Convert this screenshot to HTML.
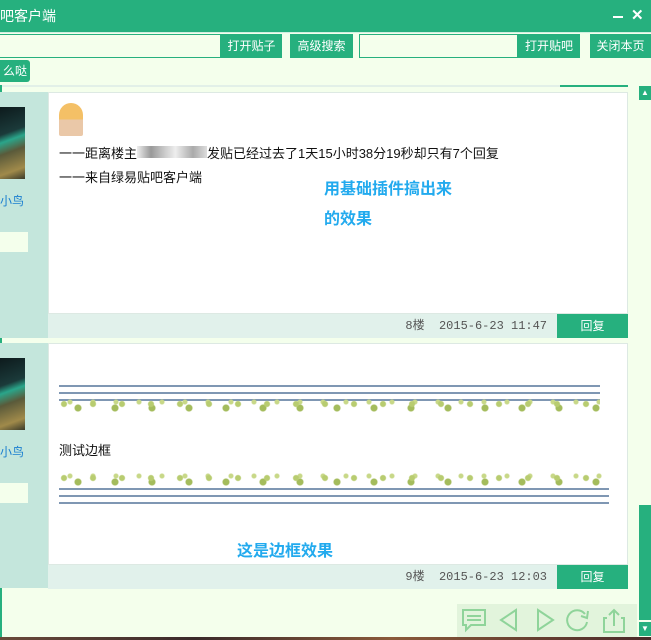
<!DOCTYPE html>
<html><head><meta charset="utf-8"><style>
*{margin:0;padding:0;box-sizing:border-box}
body{width:651px;height:640px;position:relative;overflow:hidden;background:#f4ffec;font-family:"Liberation Sans","Noto Sans CJK SC",sans-serif;font-size:13px;color:#111}
.a{position:absolute}
.title{left:0;top:0;width:651px;height:32px;background:#26b07e;color:#fff;font-size:14px;line-height:32px;padding-left:0}
.inp{background:#f4ffec;border:1px solid #26b07e;height:24px;top:34px}
.btn{background:#26b07e;color:#fff;height:24px;top:34px;line-height:24px;text-align:center;font-size:12px}
.left{background:#c4e6dc;left:0;width:48px}
.post{background:#fff;left:48px;width:580px;border:1px solid #dde9e3}
.foot{background:#e1f1eb;left:48px;width:509px;height:24px;text-align:right;font-size:12px;color:#555;line-height:24px;padding-right:10px;font-family:"Liberation Mono","Noto Sans CJK SC",monospace}
.rep{background:#26b07e;color:#fff;left:557px;width:71px;height:24px;line-height:24px;text-align:center;font-size:12px}
.pic{left:0;width:25px;height:72px;background:linear-gradient(160deg,#0d1a1c 0%,#1b3a3a 35%,#2aa58a 45%,#5a5a3a 60%,#a08a4a 85%,#3a3a2a 100%)}
.name{color:#1a7fd0;font-size:12px;left:0}
.box{left:0;width:28px;height:20px;background:#f4ffec}
.blue{color:#22aaee;font-weight:bold;font-size:16px}
.line{height:2px;background:#7f97b3;left:59px}
.stars{height:16px;left:59px;background:
radial-gradient(circle at 5px 6px,#b8cc70 0 2.5px,transparent 3.5px) 0 0/29px 16px,
radial-gradient(circle at 5px 10px,#a4bc5c 0 3px,transparent 4px) 14px 0/37px 16px,
radial-gradient(circle at 4px 4px,#c8d888 0 2px,transparent 3px) 7px 0/23px 16px}
</style></head><body>
<div class="a title">吧客户端</div>
<div class="a" style="left:613px;top:16px;width:10px;height:2px;background:#fff"></div>
<div class="a" style="left:631px;top:6px;color:#fff;font-size:15px;font-weight:bold">✕</div>
<div class="a" style="left:0;top:32px;width:651px;height:1px;background:#d0eee0"></div>
<div class="a inp" style="left:-1px;width:222px"></div>
<div class="a btn" style="left:221px;width:61px">打开贴子</div>
<div class="a btn" style="left:290px;width:63px">高级搜索</div>
<div class="a inp" style="left:359px;width:159px"></div>
<div class="a btn" style="left:518px;width:62px">打开贴吧</div>
<div class="a btn" style="left:590px;width:61px">关闭本页</div>
<div class="a btn" style="left:0;top:60px;width:30px;height:22px;line-height:22px;border-radius:0 3px 3px 0">么哒</div>
<div class="a" style="left:0;top:85px;width:560px;height:2px;background:#e2f0e8"></div>
<div class="a" style="left:560px;top:85px;width:68px;height:2px;background:#26b07e"></div>
<div class="a" style="left:0;top:85px;width:2px;height:552px;background:#26b07e"></div>

<div class="a left" style="top:92px;height:246px"></div>
<div class="a pic" style="top:107px"></div>
<div class="a name" style="top:192px">小鸟</div>
<div class="a box" style="top:232px"></div>
<div class="a post" style="top:92px;height:222px"></div>
<div class="a" style="left:59px;top:103px;width:24px;height:33px;border-radius:12px 12px 2px 2px;background:linear-gradient(#f4c066 0 50%,#eac8a8 50%)"></div>
<div class="a" style="left:59px;top:143px">一一距离楼主<span style="display:inline-block;width:70px;height:12px;background:linear-gradient(90deg,#eee,#999 20%,#ccc 40%,#eee 55%,#aaa 80%,#ddd)"></span>发贴已经过去了1天15小时38分19秒却只有7个回复</div>
<div class="a" style="left:59px;top:167px">一一来自绿易贴吧客户端</div>
<div class="a blue" style="left:324px;top:175px">用基础插件搞出来</div>
<div class="a blue" style="left:324px;top:205px">的效果</div>
<div class="a foot" style="top:314px">8楼&nbsp;&nbsp;2015-6-23 11:47</div>
<div class="a rep" style="top:314px">回复</div>

<div class="a left" style="top:343px;height:245px"></div>
<div class="a pic" style="top:358px"></div>
<div class="a name" style="top:443px">小鸟</div>
<div class="a box" style="top:483px"></div>
<div class="a post" style="top:343px;height:222px"></div>
<div class="a line" style="top:385px;width:541px"></div>
<div class="a line" style="top:392px;width:541px"></div>
<div class="a line" style="top:399px;width:541px"></div>
<div class="a stars" style="top:398px;width:541px"></div>
<div class="a" style="left:59px;top:440px">测试边框</div>
<div class="a stars" style="top:472px;width:550px"></div>
<div class="a line" style="top:488px;width:550px"></div>
<div class="a line" style="top:495px;width:550px"></div>
<div class="a line" style="top:502px;width:550px"></div>
<div class="a blue" style="left:237px;top:537px">这是边框效果</div>
<div class="a foot" style="top:565px">9楼&nbsp;&nbsp;2015-6-23 12:03</div>
<div class="a rep" style="top:565px">回复</div>

<div class="a" style="left:638px;top:85px;width:13px;height:552px;background:#f4ffec"></div>
<div class="a" style="left:639px;top:86px;width:12px;height:14px;background:#26b07e;color:#fff;font-size:8px;text-align:center;line-height:14px">▲</div>
<div class="a" style="left:639px;top:505px;width:12px;height:115px;background:#26b07e"></div>
<div class="a" style="left:639px;top:622px;width:12px;height:14px;background:#26b07e;color:#fff;font-size:8px;text-align:center;line-height:14px">▼</div>

<div class="a" style="left:457px;top:604px;width:180px;height:33px;background:#e2f4dc"></div>
<svg class="a" style="left:457px;top:604px" width="180" height="33" fill="none" stroke="#8fd49a" stroke-width="2">
<path d="M6 6h22v15H14l-5 5v-5H6z"/><path d="M10 12h14M10 16h14"/>
<path d="M59 6L44 16l15 10z"/>
<path d="M81 6l15 10-15 10z"/>
<path d="M128 10a10 10 0 1 0 2 8"/><path d="M124 12l6 2 1-7"/>
<path d="M150 14h-3v14h20V14h-3"/><path d="M157 22V6M152 11l5-5 5 5"/>
</svg>
<div class="a" style="left:0;top:637px;width:651px;height:3px;background:linear-gradient(90deg,#6a4a3a,#3a2a2a 30%,#8a5a3a 60%,#4a2a2a)"></div>
</body></html>
